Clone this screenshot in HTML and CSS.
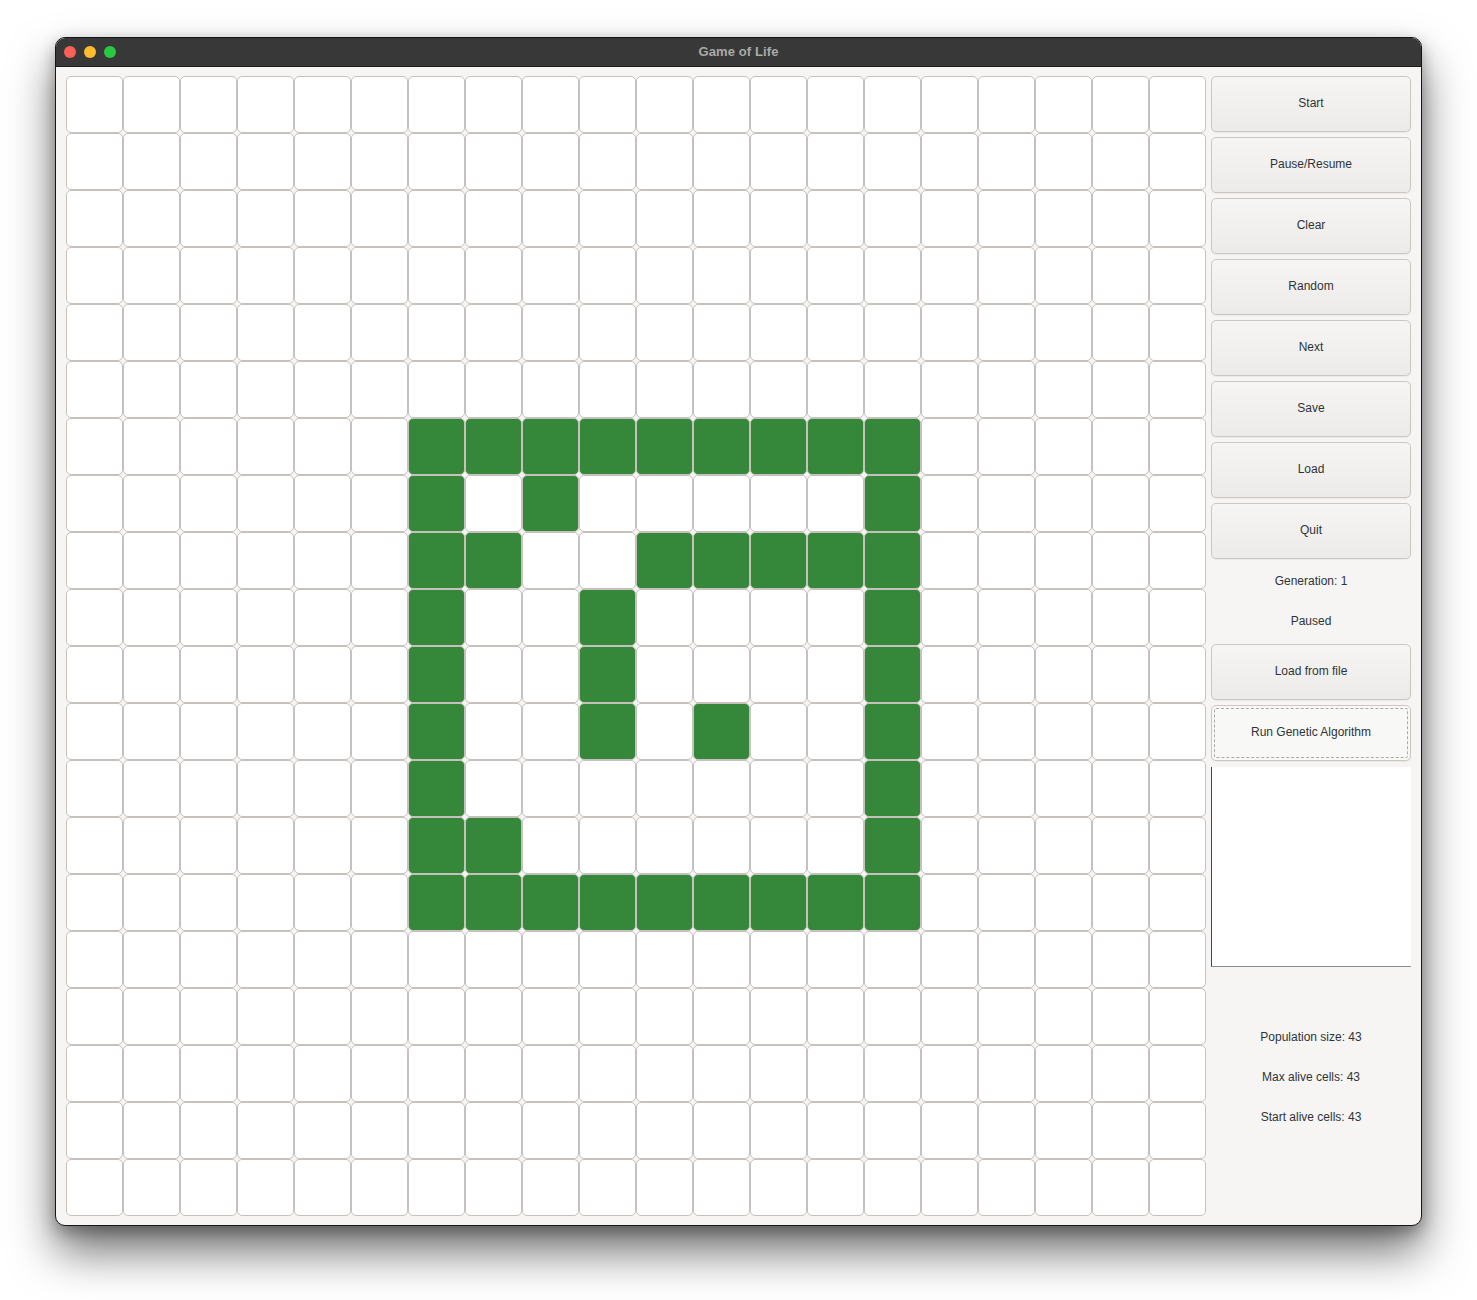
FILE: index.html
```html
<!DOCTYPE html>
<html lang="en">
<head>
<meta charset="utf-8">
<title>Game of Life</title>
<link rel="stylesheet" href="styles.css">
</head>
<body>
<div class="window">
  <div class="titlebar">
    <div class="lights">
      <span class="light red"></span>
      <span class="light yellow"></span>
      <span class="light green"></span>
    </div>
    <div class="title">Game of Life</div>
    <div></div>
  </div>
  <div class="content">
    <div class="board">
      <div class="c"></div><div class="c"></div><div class="c"></div><div class="c"></div><div class="c"></div><div class="c"></div><div class="c"></div><div class="c"></div><div class="c"></div><div class="c"></div><div class="c"></div><div class="c"></div><div class="c"></div><div class="c"></div><div class="c"></div><div class="c"></div><div class="c"></div><div class="c"></div><div class="c"></div><div class="c"></div>
      <div class="c"></div><div class="c"></div><div class="c"></div><div class="c"></div><div class="c"></div><div class="c"></div><div class="c"></div><div class="c"></div><div class="c"></div><div class="c"></div><div class="c"></div><div class="c"></div><div class="c"></div><div class="c"></div><div class="c"></div><div class="c"></div><div class="c"></div><div class="c"></div><div class="c"></div><div class="c"></div>
      <div class="c"></div><div class="c"></div><div class="c"></div><div class="c"></div><div class="c"></div><div class="c"></div><div class="c"></div><div class="c"></div><div class="c"></div><div class="c"></div><div class="c"></div><div class="c"></div><div class="c"></div><div class="c"></div><div class="c"></div><div class="c"></div><div class="c"></div><div class="c"></div><div class="c"></div><div class="c"></div>
      <div class="c"></div><div class="c"></div><div class="c"></div><div class="c"></div><div class="c"></div><div class="c"></div><div class="c"></div><div class="c"></div><div class="c"></div><div class="c"></div><div class="c"></div><div class="c"></div><div class="c"></div><div class="c"></div><div class="c"></div><div class="c"></div><div class="c"></div><div class="c"></div><div class="c"></div><div class="c"></div>
      <div class="c"></div><div class="c"></div><div class="c"></div><div class="c"></div><div class="c"></div><div class="c"></div><div class="c"></div><div class="c"></div><div class="c"></div><div class="c"></div><div class="c"></div><div class="c"></div><div class="c"></div><div class="c"></div><div class="c"></div><div class="c"></div><div class="c"></div><div class="c"></div><div class="c"></div><div class="c"></div>
      <div class="c"></div><div class="c"></div><div class="c"></div><div class="c"></div><div class="c"></div><div class="c"></div><div class="c"></div><div class="c"></div><div class="c"></div><div class="c"></div><div class="c"></div><div class="c"></div><div class="c"></div><div class="c"></div><div class="c"></div><div class="c"></div><div class="c"></div><div class="c"></div><div class="c"></div><div class="c"></div>
      <div class="c"></div><div class="c"></div><div class="c"></div><div class="c"></div><div class="c"></div><div class="c"></div><div class="c on"></div><div class="c on"></div><div class="c on"></div><div class="c on"></div><div class="c on"></div><div class="c on"></div><div class="c on"></div><div class="c on"></div><div class="c on"></div><div class="c"></div><div class="c"></div><div class="c"></div><div class="c"></div><div class="c"></div>
      <div class="c"></div><div class="c"></div><div class="c"></div><div class="c"></div><div class="c"></div><div class="c"></div><div class="c on"></div><div class="c"></div><div class="c on"></div><div class="c"></div><div class="c"></div><div class="c"></div><div class="c"></div><div class="c"></div><div class="c on"></div><div class="c"></div><div class="c"></div><div class="c"></div><div class="c"></div><div class="c"></div>
      <div class="c"></div><div class="c"></div><div class="c"></div><div class="c"></div><div class="c"></div><div class="c"></div><div class="c on"></div><div class="c on"></div><div class="c"></div><div class="c"></div><div class="c on"></div><div class="c on"></div><div class="c on"></div><div class="c on"></div><div class="c on"></div><div class="c"></div><div class="c"></div><div class="c"></div><div class="c"></div><div class="c"></div>
      <div class="c"></div><div class="c"></div><div class="c"></div><div class="c"></div><div class="c"></div><div class="c"></div><div class="c on"></div><div class="c"></div><div class="c"></div><div class="c on"></div><div class="c"></div><div class="c"></div><div class="c"></div><div class="c"></div><div class="c on"></div><div class="c"></div><div class="c"></div><div class="c"></div><div class="c"></div><div class="c"></div>
      <div class="c"></div><div class="c"></div><div class="c"></div><div class="c"></div><div class="c"></div><div class="c"></div><div class="c on"></div><div class="c"></div><div class="c"></div><div class="c on"></div><div class="c"></div><div class="c"></div><div class="c"></div><div class="c"></div><div class="c on"></div><div class="c"></div><div class="c"></div><div class="c"></div><div class="c"></div><div class="c"></div>
      <div class="c"></div><div class="c"></div><div class="c"></div><div class="c"></div><div class="c"></div><div class="c"></div><div class="c on"></div><div class="c"></div><div class="c"></div><div class="c on"></div><div class="c"></div><div class="c on"></div><div class="c"></div><div class="c"></div><div class="c on"></div><div class="c"></div><div class="c"></div><div class="c"></div><div class="c"></div><div class="c"></div>
      <div class="c"></div><div class="c"></div><div class="c"></div><div class="c"></div><div class="c"></div><div class="c"></div><div class="c on"></div><div class="c"></div><div class="c"></div><div class="c"></div><div class="c"></div><div class="c"></div><div class="c"></div><div class="c"></div><div class="c on"></div><div class="c"></div><div class="c"></div><div class="c"></div><div class="c"></div><div class="c"></div>
      <div class="c"></div><div class="c"></div><div class="c"></div><div class="c"></div><div class="c"></div><div class="c"></div><div class="c on"></div><div class="c on"></div><div class="c"></div><div class="c"></div><div class="c"></div><div class="c"></div><div class="c"></div><div class="c"></div><div class="c on"></div><div class="c"></div><div class="c"></div><div class="c"></div><div class="c"></div><div class="c"></div>
      <div class="c"></div><div class="c"></div><div class="c"></div><div class="c"></div><div class="c"></div><div class="c"></div><div class="c on"></div><div class="c on"></div><div class="c on"></div><div class="c on"></div><div class="c on"></div><div class="c on"></div><div class="c on"></div><div class="c on"></div><div class="c on"></div><div class="c"></div><div class="c"></div><div class="c"></div><div class="c"></div><div class="c"></div>
      <div class="c"></div><div class="c"></div><div class="c"></div><div class="c"></div><div class="c"></div><div class="c"></div><div class="c"></div><div class="c"></div><div class="c"></div><div class="c"></div><div class="c"></div><div class="c"></div><div class="c"></div><div class="c"></div><div class="c"></div><div class="c"></div><div class="c"></div><div class="c"></div><div class="c"></div><div class="c"></div>
      <div class="c"></div><div class="c"></div><div class="c"></div><div class="c"></div><div class="c"></div><div class="c"></div><div class="c"></div><div class="c"></div><div class="c"></div><div class="c"></div><div class="c"></div><div class="c"></div><div class="c"></div><div class="c"></div><div class="c"></div><div class="c"></div><div class="c"></div><div class="c"></div><div class="c"></div><div class="c"></div>
      <div class="c"></div><div class="c"></div><div class="c"></div><div class="c"></div><div class="c"></div><div class="c"></div><div class="c"></div><div class="c"></div><div class="c"></div><div class="c"></div><div class="c"></div><div class="c"></div><div class="c"></div><div class="c"></div><div class="c"></div><div class="c"></div><div class="c"></div><div class="c"></div><div class="c"></div><div class="c"></div>
      <div class="c"></div><div class="c"></div><div class="c"></div><div class="c"></div><div class="c"></div><div class="c"></div><div class="c"></div><div class="c"></div><div class="c"></div><div class="c"></div><div class="c"></div><div class="c"></div><div class="c"></div><div class="c"></div><div class="c"></div><div class="c"></div><div class="c"></div><div class="c"></div><div class="c"></div><div class="c"></div>
      <div class="c"></div><div class="c"></div><div class="c"></div><div class="c"></div><div class="c"></div><div class="c"></div><div class="c"></div><div class="c"></div><div class="c"></div><div class="c"></div><div class="c"></div><div class="c"></div><div class="c"></div><div class="c"></div><div class="c"></div><div class="c"></div><div class="c"></div><div class="c"></div><div class="c"></div><div class="c"></div>
    </div>
    <div class="panel">
      <button class="btn">Start</button>
      <button class="btn">Pause/Resume</button>
      <button class="btn">Clear</button>
      <button class="btn">Random</button>
      <button class="btn">Next</button>
      <button class="btn">Save</button>
      <button class="btn">Load</button>
      <button class="btn">Quit</button>
      <div class="label">Generation: 1</div>
      <div class="label">Paused</div>
      <button class="btn">Load from file</button>
      <button class="btn focused">Run Genetic Algorithm</button>
      <div class="textbox"></div>
      <div class="label stats-first">Population size: 43</div>
      <div class="label">Max alive cells: 43</div>
      <div class="label">Start alive cells: 43</div>
    </div>
  </div>
</div>
</body>
</html>
```

FILE: styles.css
```css
html, body {
  margin: 0;
  padding: 0;
  background: #ffffff;
}

body {
  box-sizing: border-box;
  min-height: 1300px;
  padding: 37px 0 74px 55px;
  font-family: "Liberation Sans", Arial, sans-serif;
  color: #2e3436;
}

.window {
  box-sizing: border-box;
  width: 1367px;
  height: 1189px;
  border: 1px solid #161616;
  border-radius: 10px;
  overflow: hidden;
  background: #f6f5f4;
  box-shadow: 0 26px 46px rgba(0, 0, 0, 0.55), 0 6px 16px rgba(0, 0, 0, 0.3);
}

.titlebar {
  height: 28px;
  background: #383838;
  border-bottom: 1px solid #1c1c1c;
  display: grid;
  grid-template-columns: 1fr auto 1fr;
  align-items: center;
}

.lights {
  display: flex;
  gap: 8px;
  padding-left: 8px;
}

.light {
  width: 12px;
  height: 12px;
  border-radius: 50%;
  display: block;
}

.red { background: #fe5f57; }
.yellow { background: #febc2e; }
.green { background: #28c840; }

.title {
  font-size: 13px;
  font-weight: bold;
  color: #a9a9a9;
  letter-spacing: 0.1px;
  padding-bottom: 2px;
}

.content {
  display: flex;
  gap: 5px;
  padding: 9px 11px 9px 10px;
}

.board {
  display: grid;
  grid-template-columns: repeat(20, 57px);
  grid-auto-rows: 57px;
}

.c {
  box-sizing: border-box;
  border: 1px solid #c6c1bc;
  border-radius: 5px;
  background: #ffffff;
}

.c.on {
  background: #35873a;
}

.panel {
  width: 200px;
  display: flex;
  flex-direction: column;
  gap: 5px;
}

.btn {
  box-sizing: border-box;
  height: 56px;
  width: 200px;
  margin: 0;
  border: 1px solid #cdc7c2;
  border-radius: 5px;
  background: linear-gradient(#f6f5f4, #edebe9);
  box-shadow: 0 1px 1px rgba(0, 0, 0, 0.05);
  font-family: "Liberation Sans", Arial, sans-serif;
  font-size: 12px;
  color: #2e3436;
  padding: 0 0 3px 0;
}

.btn.focused {
  background: #f8f8f7;
  outline: 1px dashed #a9a9a9;
  outline-offset: -4px;
}

.label {
  box-sizing: border-box;
  height: 35px;
  display: flex;
  align-items: center;
  justify-content: center;
  font-size: 12px;
  color: #2e3436;
  padding-bottom: 2px;
}

.textbox {
  box-sizing: border-box;
  height: 200px;
  margin-top: 1px;
  background: #ffffff;
  border-left: 1px solid #3535c8;
  border-bottom: 1px solid #8c8c8c;
}

.stats-first {
  margin-top: 48px;
}
```
